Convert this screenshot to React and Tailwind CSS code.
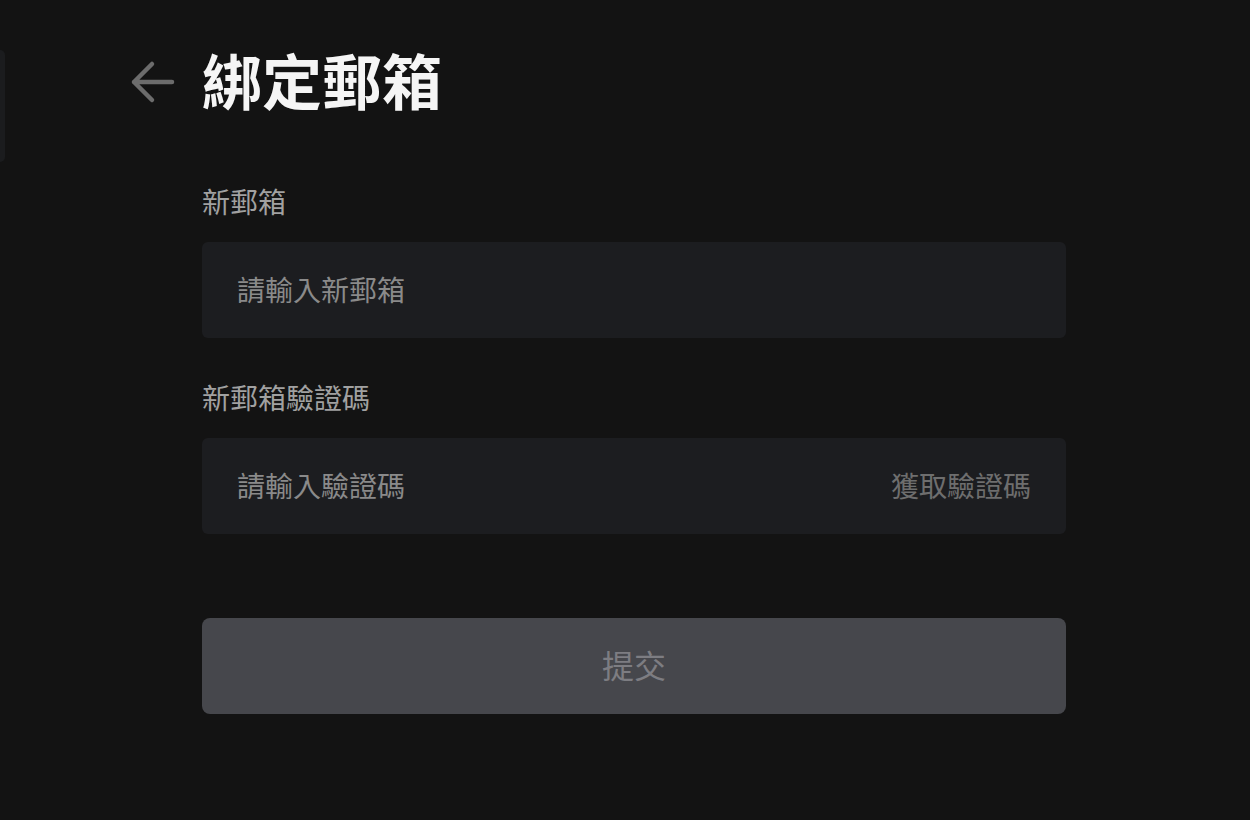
import React from "react";

const font = { fontFamily: '"Noto Sans CJK TC", "Noto Sans", sans-serif' };

export default function App() {
  return (
    <div
      className="w-[1250px] h-[820px] bg-[#131313] flex overflow-hidden"
      style={font}
    >
      <div className="w-[5px] h-[112px] mt-[50px] rounded-r-[6px] bg-[#1b1c1e] shrink-0" />
      <div className="flex flex-col ml-[197px] w-[864px]">
        <div className="flex items-center mt-[49px] -ml-[73px]">
          <svg width="48" height="48" viewBox="0 0 48 48" fill="none" className="shrink-0 mt-[6px]">
            <path
              d="M23 6 L5 24 L23 42 M5 24 H43"
              stroke="#6c6c6c"
              strokeWidth="4.5"
              strokeLinecap="round"
              strokeLinejoin="round"
            />
          </svg>
          <h1 className="ml-[25px] text-[60px] leading-[60px] font-bold text-[#f5f5f5]">
            綁定郵箱
          </h1>
        </div>

        <label className="mt-[78px] text-[28px] leading-[28px] text-[#a1a1a1]">新郵箱</label>
        <div className="mt-[27px] h-[96px] rounded-[6px] bg-[#1c1d20] flex items-center px-[35px]">
          <input
            className="flex-1 bg-transparent outline-none text-[28px] text-[#d0d0d0] placeholder:text-[#8a8a8a] -mt-[2px]"
            placeholder="請輸入新郵箱"
          />
        </div>

        <label className="mt-[45px] text-[28px] leading-[28px] text-[#a1a1a1]">新郵箱驗證碼</label>
        <div className="mt-[27px] h-[96px] rounded-[6px] bg-[#1c1d20] flex items-center px-[35px]">
          <input
            className="flex-1 min-w-0 bg-transparent outline-none text-[28px] text-[#d0d0d0] placeholder:text-[#8a8a8a] -mt-[2px]"
            placeholder="請輸入驗證碼"
          />
          <span className="text-[28px] text-[#6e6e6e] shrink-0 -mt-[2px]">獲取驗證碼</span>
        </div>

        <button className="mt-[84px] h-[96px] rounded-[8px] bg-[#46474c] text-[32px] leading-[32px] text-[#7d7d82] flex items-center justify-center">
          <span className="-mt-[4px]">提交</span>
        </button>
      </div>
    </div>
  );
}
